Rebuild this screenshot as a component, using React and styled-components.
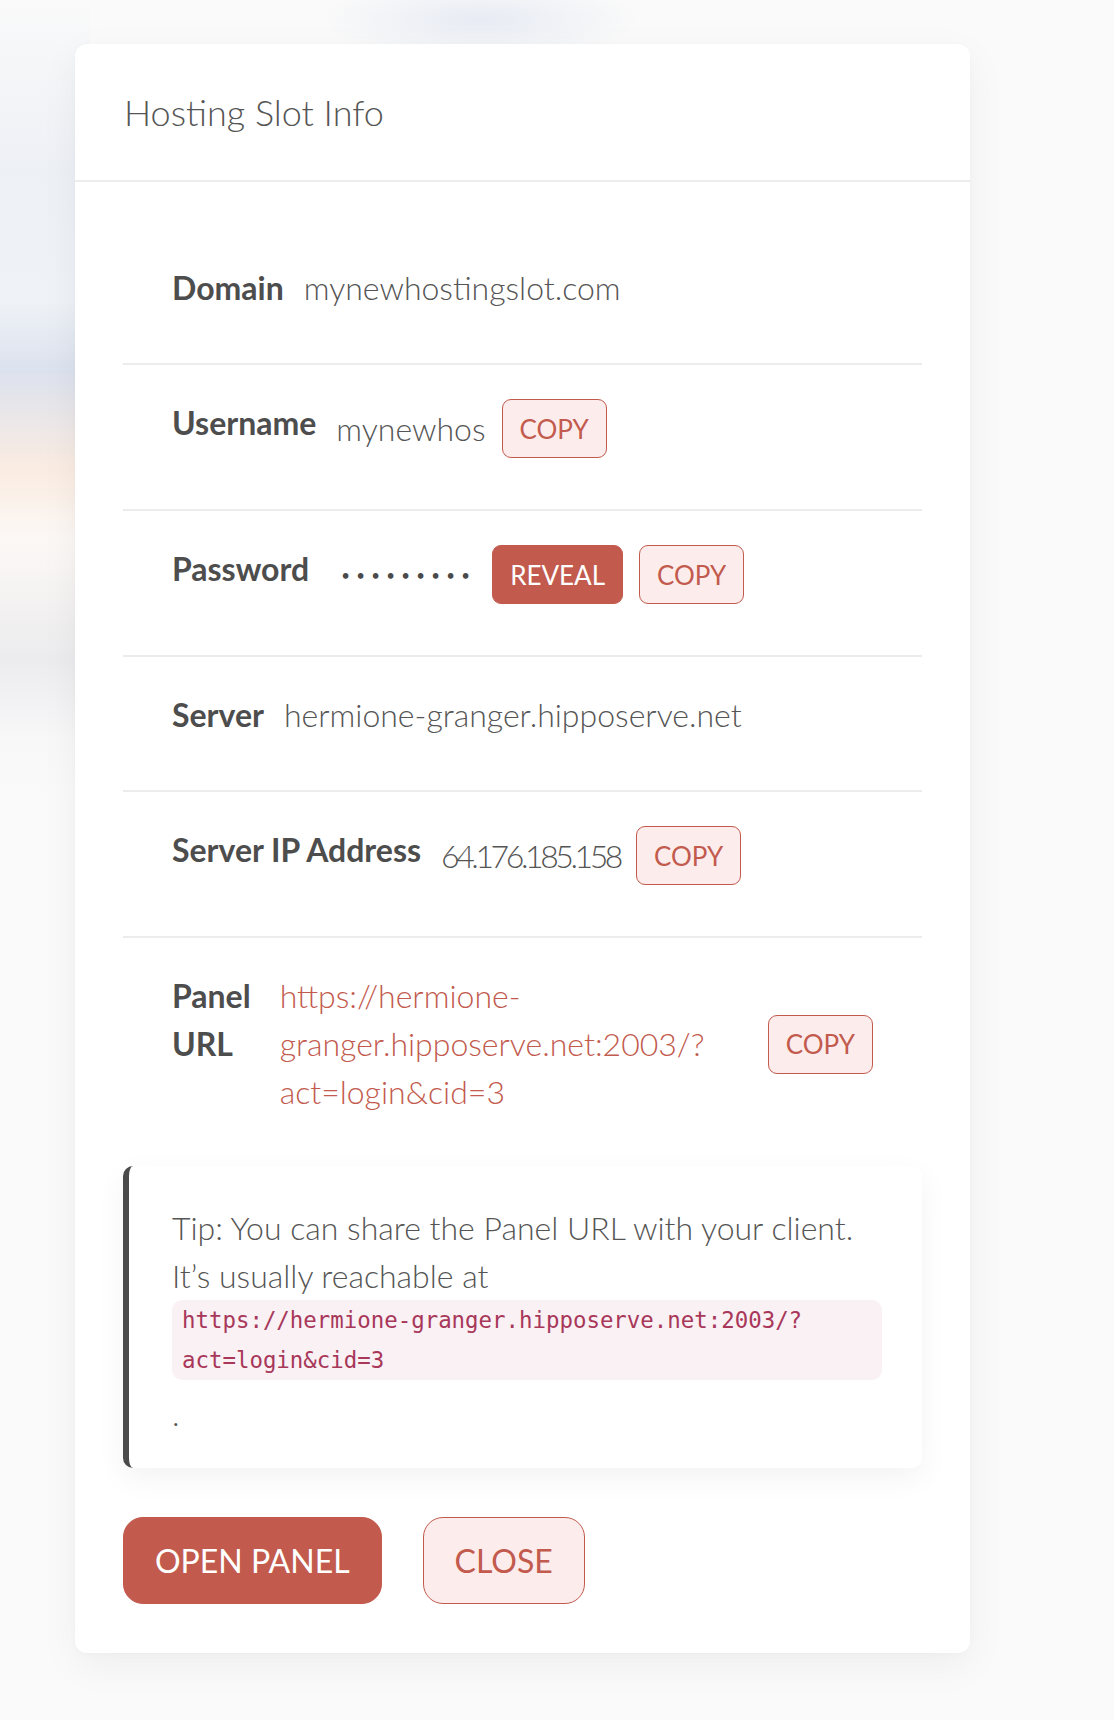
import React from "react";
import styled, { createGlobalStyle } from "styled-components";

const Global = createGlobalStyle`
  html, body { margin: 0; padding: 0; }
  body {
    font-family: Lato, "Open Sans", sans-serif;
    background-color: #fafafa;
    background-image:
      radial-gradient(ellipse 160px 40px at 480px 20px, rgba(215, 222, 238, 0.55), rgba(215,222,238,0) 100%),
      linear-gradient(180deg,
        rgba(250,250,250,0) 0px,
        rgba(236,239,245,0.9) 170px,
        rgba(238,241,246,0.9) 300px,
        rgba(220,226,238,1) 370px,
        rgba(250,236,226,1) 470px,
        rgba(252,248,246,1) 540px,
        rgba(236,236,238,1) 660px,
        rgba(248,248,249,1) 740px,
        rgba(250,250,250,0) 800px);
    background-repeat: no-repeat;
    background-size: 100% 100%, 90px 100%;
    min-height: 1720px;
  }
`;

const Page = styled.div`
  padding: 44px 0 68px 75px;
`;

const Card = styled.section`
  width: 895px;
  background: #ffffff;
  border-radius: 12px;
  box-shadow: 0 12px 40px rgba(0, 0, 0, 0.05), 0 2px 8px rgba(0, 0, 0, 0.02);
`;

const Header = styled.header`
  height: 136px;
  display: flex;
  align-items: center;
  padding: 0 49px;
  border-bottom: 2px solid #ececec;
`;

const Title = styled.h2`
  margin: 0;
  font-weight: 300;
  font-size: 36px;
  color: #555;
`;

const Body = styled.div`
  padding: 48px 48px 49px;
`;

const Row = styled.div`
  display: flex;
  align-items: flex-start;
  gap: ${(p) => (p.$last ? "29px" : "20px")};
  padding: 34px 49px ${(p) => (p.$last ? "0" : "51px")};
  border-bottom: ${(p) => (p.$last ? "none" : "2px solid #ececec")};
`;

const Label = styled.div`
  font-weight: 700;
  font-size: 32px;
  line-height: 48px;
  color: #4d4d4d;
  white-space: ${(p) => (p.$wrap ? "normal" : "nowrap")};
  width: ${(p) => (p.$wrap ? "min-content" : "auto")};
  flex-shrink: 0;
`;

const Values = styled.div`
  display: flex;
  align-items: center;
  gap: 16px;
  flex: ${(p) => (p.$grow ? "1 1 0" : "0 1 auto")};
  min-width: 0;
`;

const Value = styled.span`
  font-weight: 300;
  font-size: 32px;
  line-height: 48px;
  color: #555;
  white-space: nowrap;
  letter-spacing: ${(p) => (p.$tight ? "-3.4px" : "0")};
`;

const Dots = styled.span`
  font-size: 15px;
  line-height: 48px;
  color: #4a4a4a;
  letter-spacing: 6.3px;
  margin-left: 12px;
`;

const Link = styled.a`
  font-weight: 300;
  font-size: 32px;
  line-height: 48px;
  color: #c25a4d;
  text-decoration: none;
  flex: 1 1 0;
`;

const SmallButton = styled.button`
  font-family: Lato, sans-serif;
  font-size: 26px;
  font-weight: 400;
  height: 59px;
  padding: 0 17px;
  border-radius: 9px;
  border: 1px solid #c25a4d;
  background: ${(p) => (p.$solid ? "#c25a4d" : "#fcecec")};
  color: ${(p) => (p.$solid ? "#fff" : "#c25a4d")};
  flex-shrink: 0;
  cursor: pointer;
`;

const Tip = styled.div`
  margin-top: 50px;
  padding: 38px 40px 30px 43px;
  border-left: 6px solid #4a4a4a;
  border-radius: 10px;
  background: #fff;
  box-shadow: 0 10px 30px rgba(0, 0, 0, 0.05);
  font-weight: 300;
  font-size: 32px;
  line-height: 48px;
  color: #555;
`;

const Code = styled.code`
  display: block;
  font-family: "DejaVu Sans Mono", monospace;
  font-size: 22.4px;
  line-height: 40px;
  color: #a8375a;
  background: #f9f1f3;
  border-radius: 10px;
  padding: 0 10px;
  margin-bottom: 10px;
`;

const Actions = styled.div`
  display: flex;
  gap: 41px;
  margin-top: 49px;
`;

const BigButton = styled.button`
  font-family: Lato, sans-serif;
  font-size: 32px;
  font-weight: 400;
  height: 87px;
  padding: 0 31px;
  border-radius: 20px;
  border: 1px solid #c25a4d;
  background: ${(p) => (p.$solid ? "#c25a4d" : "#fcecec")};
  color: ${(p) => (p.$solid ? "#fff" : "#c25a4d")};
  cursor: pointer;
`;

export default function App() {
  return (
    <>
      <Global />
      <Page>
        <Card>
          <Header>
            <Title>Hosting Slot Info</Title>
          </Header>
          <Body>
            <Row>
              <Label>Domain</Label>
              <Values>
                <Value>mynewhostingslot.com</Value>
              </Values>
            </Row>
            <Row>
              <Label>Username</Label>
              <Values>
                <Value>mynewhos</Value>
                <SmallButton>COPY</SmallButton>
              </Values>
            </Row>
            <Row>
              <Label>Password</Label>
              <Values>
                <Dots>•••••••••</Dots>
                <SmallButton $solid>REVEAL</SmallButton>
                <SmallButton>COPY</SmallButton>
              </Values>
            </Row>
            <Row>
              <Label>Server</Label>
              <Values>
                <Value>hermione-granger.hipposerve.net</Value>
              </Values>
            </Row>
            <Row>
              <Label>Server IP Address</Label>
              <Values>
                <Value $tight>64.176.185.158</Value>
                <SmallButton>COPY</SmallButton>
              </Values>
            </Row>
            <Row $last>
              <Label $wrap>Panel URL</Label>
              <Values $grow>
                <Link href="#">
                  https://hermione-granger.hipposerve.net:2003/?<wbr />act=login&amp;cid=3
                </Link>
                <SmallButton>COPY</SmallButton>
              </Values>
            </Row>
            <Tip>
              Tip: You can share the Panel URL with your client. It’s usually reachable at
              <Code>
                https://hermione-granger.hipposerve.net:2003/?<wbr />act=login&amp;cid=3
              </Code>
              .
            </Tip>
            <Actions>
              <BigButton $solid>OPEN PANEL</BigButton>
              <BigButton>CLOSE</BigButton>
            </Actions>
          </Body>
        </Card>
      </Page>
    </>
  );
}
